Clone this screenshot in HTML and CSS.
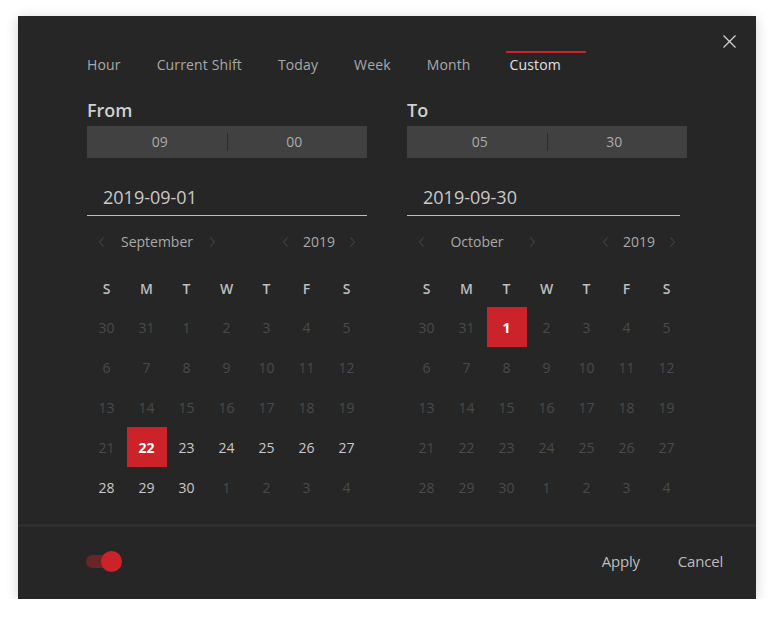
FILE: index.html
```html
<!DOCTYPE html>
<html>
<head>
<meta charset="utf-8">
<link rel="stylesheet" href="styles.css">
</head>
<body>
<div class="dialog">
  <button class="close" aria-label="Close">
    <svg width="13" height="13" viewBox="0 0 13 13"><path d="M0.5 0.5L12.5 12.5M12.5 0.5L0.5 12.5" stroke="#d0d0d0" stroke-width="1.3" fill="none"/></svg>
  </button>
  <div class="content">
    <nav class="tabs">
      <span class="tab">Hour</span>
      <span class="tab">Current Shift</span>
      <span class="tab">Today</span>
      <span class="tab">Week</span>
      <span class="tab">Month</span>
      <span class="tab active">Custom</span>
    </nav>
    <div class="cols">
      <section class="col">
        <div class="label">From</div>
        <div class="time"><span>09</span><i class="sep"></i><span>00</span></div>
        <div class="field">2019-09-01</div>
        <div class="nav">
          <div class="grp month">
            <svg class="chev" width="5" height="10" viewBox="0 0 5 10"><path d="M4.5 0.5L0.7 5L4.5 9.5" stroke="#4a4a4a" fill="none"/></svg>
            <span>September</span>
            <svg class="chev" width="5" height="10" viewBox="0 0 5 10"><path d="M0.5 0.5L4.3 5L0.5 9.5" stroke="#4a4a4a" fill="none"/></svg>
          </div>
          <div class="grp year">
            <svg class="chev" width="5" height="10" viewBox="0 0 5 10"><path d="M4.5 0.5L0.7 5L4.5 9.5" stroke="#4a4a4a" fill="none"/></svg>
            <span>2019</span>
            <svg class="chev" width="5" height="10" viewBox="0 0 5 10"><path d="M0.5 0.5L4.3 5L0.5 9.5" stroke="#4a4a4a" fill="none"/></svg>
          </div>
        </div>
        <div class="grid">
          <span class="wd">S</span><span class="wd">M</span><span class="wd">T</span><span class="wd">W</span><span class="wd">T</span><span class="wd">F</span><span class="wd">S</span>
          <span class="d">30</span><span class="d">31</span><span class="d">1</span><span class="d">2</span><span class="d">3</span><span class="d">4</span><span class="d">5</span>
          <span class="d">6</span><span class="d">7</span><span class="d">8</span><span class="d">9</span><span class="d">10</span><span class="d">11</span><span class="d">12</span>
          <span class="d">13</span><span class="d">14</span><span class="d">15</span><span class="d">16</span><span class="d">17</span><span class="d">18</span><span class="d">19</span>
          <span class="d">21</span><span class="d sel">22</span><span class="d on">23</span><span class="d on">24</span><span class="d on">25</span><span class="d on">26</span><span class="d on">27</span>
          <span class="d on">28</span><span class="d on">29</span><span class="d on">30</span><span class="d">1</span><span class="d">2</span><span class="d">3</span><span class="d">4</span>
        </div>
      </section>
      <section class="col">
        <div class="label">To</div>
        <div class="time"><span>05</span><i class="sep"></i><span>30</span></div>
        <div class="field short">2019-09-30</div>
        <div class="nav">
          <div class="grp month">
            <svg class="chev" width="5" height="10" viewBox="0 0 5 10"><path d="M4.5 0.5L0.7 5L4.5 9.5" stroke="#4a4a4a" fill="none"/></svg>
            <span>October</span>
            <svg class="chev" width="5" height="10" viewBox="0 0 5 10"><path d="M0.5 0.5L4.3 5L0.5 9.5" stroke="#4a4a4a" fill="none"/></svg>
          </div>
          <div class="grp year">
            <svg class="chev" width="5" height="10" viewBox="0 0 5 10"><path d="M4.5 0.5L0.7 5L4.5 9.5" stroke="#4a4a4a" fill="none"/></svg>
            <span>2019</span>
            <svg class="chev" width="5" height="10" viewBox="0 0 5 10"><path d="M0.5 0.5L4.3 5L0.5 9.5" stroke="#4a4a4a" fill="none"/></svg>
          </div>
        </div>
        <div class="grid">
          <span class="wd">S</span><span class="wd">M</span><span class="wd">T</span><span class="wd">W</span><span class="wd">T</span><span class="wd">F</span><span class="wd">S</span>
          <span class="d">30</span><span class="d">31</span><span class="d sel">1</span><span class="d">2</span><span class="d">3</span><span class="d">4</span><span class="d">5</span>
          <span class="d">6</span><span class="d">7</span><span class="d">8</span><span class="d">9</span><span class="d">10</span><span class="d">11</span><span class="d">12</span>
          <span class="d">13</span><span class="d">14</span><span class="d">15</span><span class="d">16</span><span class="d">17</span><span class="d">18</span><span class="d">19</span>
          <span class="d">21</span><span class="d">22</span><span class="d">23</span><span class="d">24</span><span class="d">25</span><span class="d">26</span><span class="d">27</span>
          <span class="d">28</span><span class="d">29</span><span class="d">30</span><span class="d">1</span><span class="d">2</span><span class="d">3</span><span class="d">4</span>
        </div>
      </section>
    </div>
  </div>
  <footer class="footer">
    <div class="toggle"><span class="track"></span><span class="knob"></span></div>
    <div class="actions">
      <button class="btn">Apply</button>
      <button class="btn">Cancel</button>
    </div>
  </footer>
</div>
</body>
</html>
```

FILE: styles.css
```css
* { box-sizing: border-box; }
html, body { margin: 0; padding: 0; background: #ffffff; }
body {
  padding: 16px 0 0 18px;
  font-family: "Open Sans", "Noto Sans", sans-serif;
  font-size: 14px;
}
.dialog {
  position: relative;
  width: 738px;
  height: 583px;
  background: #262626;
  box-shadow: 0 2px 12px rgba(0, 0, 0, 0.18);
  display: flex;
  flex-direction: column;
}
.close {
  position: absolute;
  top: 19px;
  right: 20px;
  width: 13px;
  height: 13px;
  padding: 0;
  border: 0;
  background: none;
  display: block;
}
.close svg { display: block; }
.content {
  padding: 35px 0 0 69px;
  flex: 1;
}
.tabs {
  display: flex;
  height: 24px;
}
.tab {
  color: #a9a9a9;
  line-height: 20px;
  padding-top: 4px;
  margin-right: 36px;
  letter-spacing: 0.14px;
  white-space: nowrap;
}
.tab.active {
  color: #e0e0e0;
  border-top: 2px solid #cc2229;
  padding: 2px 0 0 4px;
  margin-left: -1px;
  width: 80px;
}
.cols {
  display: flex;
  gap: 40px;
  margin-top: 23px;
}
.col { width: 280px; }
.label {
  color: #cfcfcf;
  font-size: 18px;
  font-weight: 600;
  line-height: 24px;
}
.time {
  margin-top: 4px;
  height: 32px;
  background: #414141;
  display: flex;
  align-items: center;
  color: #a9a9a9;
}
.time span {
  flex: 1;
  text-align: center;
  line-height: 32px;
}
.time span:first-child { padding-left: 6px; }
.time span:last-child { padding-right: 6px; }
.sep {
  width: 1px;
  height: 18px;
  background: #2c2c2c;
}
.field {
  margin-top: 23px;
  padding: 3px 16px 5px;
  font-size: 18px;
  line-height: 26px;
  color: #c9c9c9;
  border-bottom: 1px solid #bdbdbd;
}
.field.short { width: 273px; }
.nav {
  display: flex;
  justify-content: space-between;
  align-items: center;
  height: 51px;
  color: #a9a9a9;
}
.grp {
  display: flex;
  justify-content: space-between;
  align-items: center;
  padding: 0 12px;
}
.grp.month { width: 140px; }
.grp.year { width: 96px; }
.chev { display: block; }
.grid {
  display: grid;
  grid-template-columns: repeat(7, 40px);
  grid-auto-rows: 40px;
  margin-left: -0.5px;
}
.wd {
  color: #bdbdbd;
  font-weight: 600;
  display: flex;
  align-items: center;
  justify-content: center;
  padding-top: 3px;
}
.d {
  display: flex;
  align-items: center;
  justify-content: center;
  color: #4a4a4a;
}
.d.on { color: #c9c9c9; }
.d.sel {
  background: #cc2229;
  color: #ffffff;
  font-weight: 700;
}
.footer {
  border-top: 3px solid #2f2f2f;
  height: 75px;
  display: flex;
  align-items: center;
  justify-content: space-between;
  padding: 0 33px 4px 68px;
}
.toggle {
  position: relative;
  width: 36px;
  height: 20px;
}
.track {
  position: absolute;
  left: 0;
  top: 4px;
  width: 28px;
  height: 13px;
  border-radius: 7px;
  background: #6b2528;
}
.knob {
  position: absolute;
  left: 15px;
  top: 0;
  width: 21px;
  height: 21px;
  border-radius: 50%;
  background: #cc2229;
}
.actions {
  display: flex;
  gap: 38px;
}
.btn {
  background: none;
  border: 0;
  padding: 0;
  font-family: "Open Sans", "Noto Sans", sans-serif;
  font-size: 15px;
  color: #bdbdbd;
  letter-spacing: -0.2px;
}
```
